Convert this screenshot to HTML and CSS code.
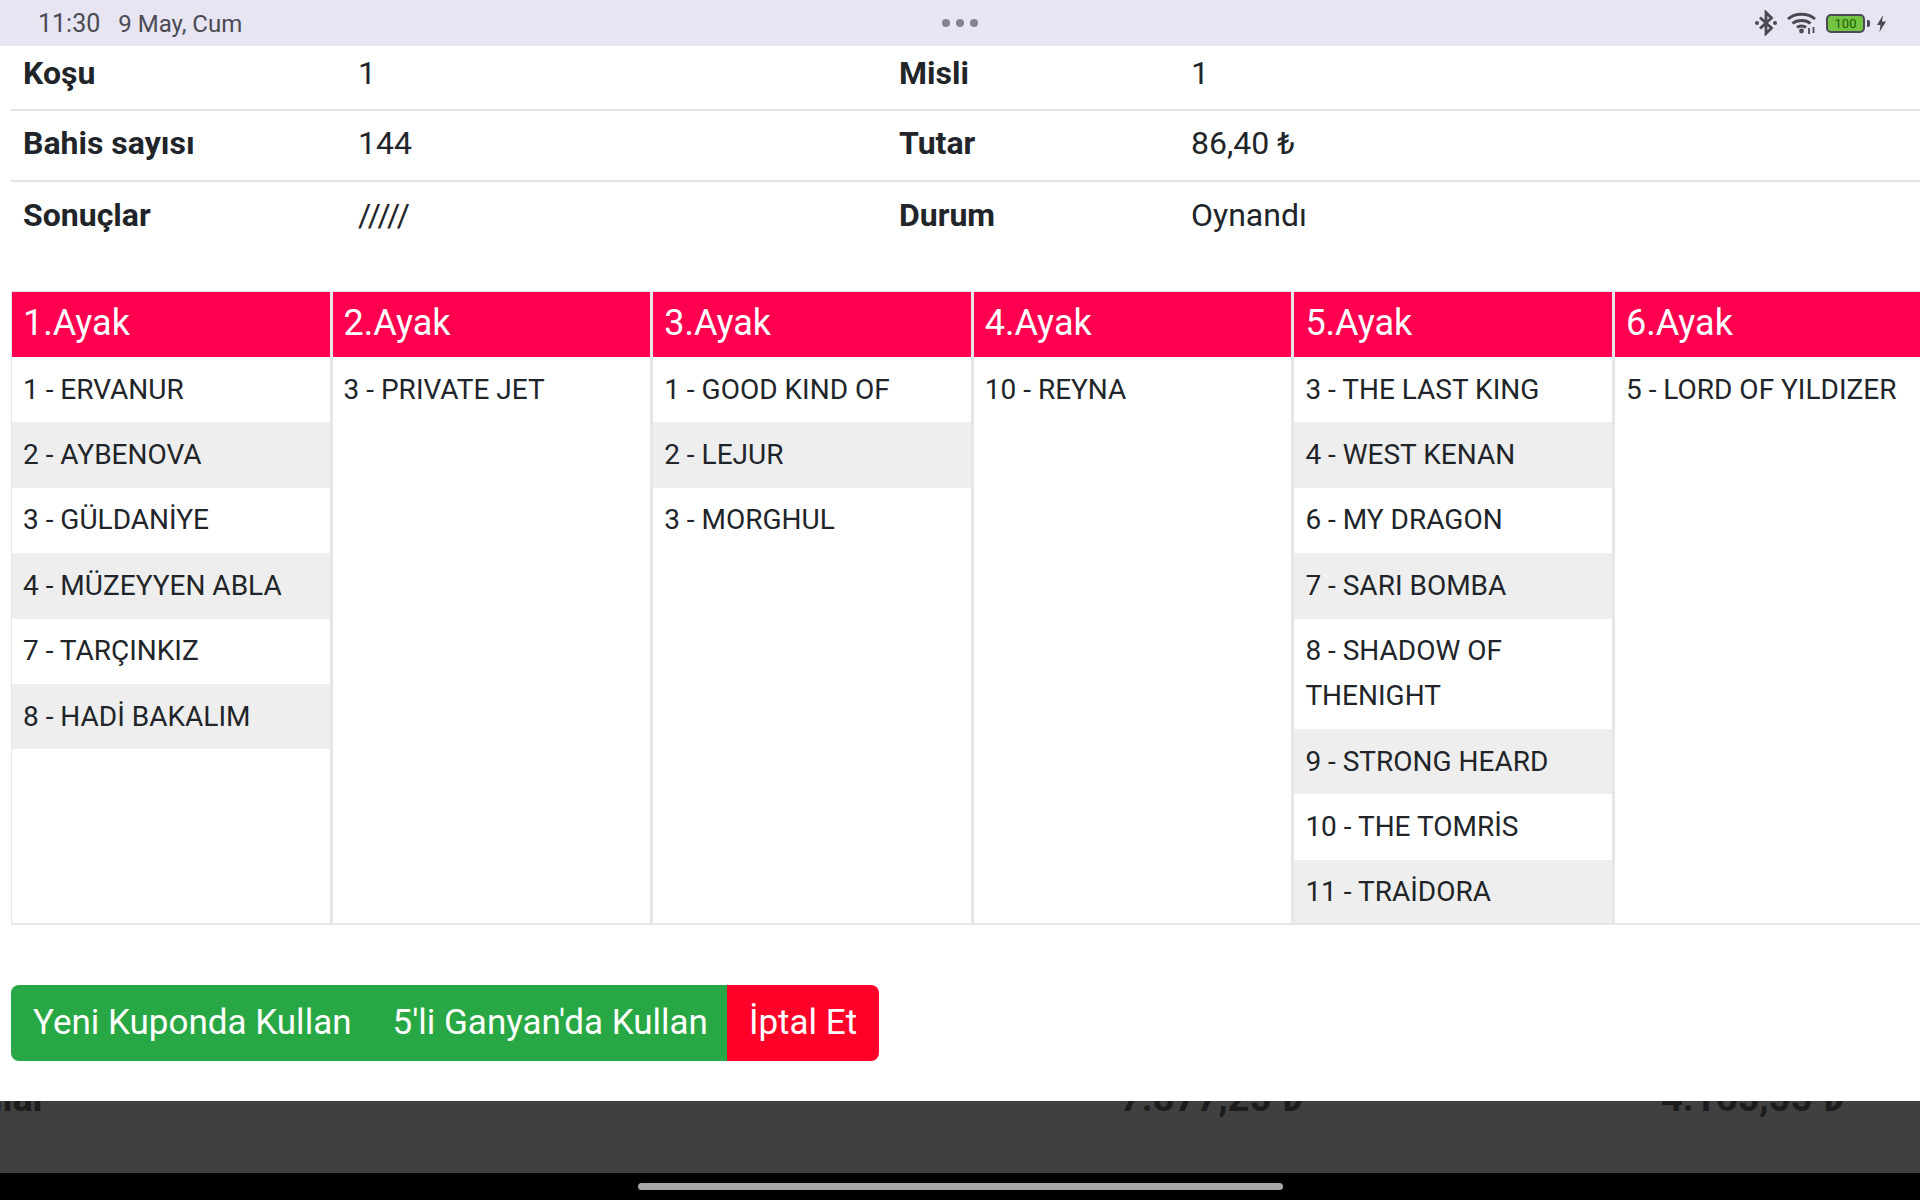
FILE: index.html
```html
<!DOCTYPE html>
<html lang="tr">
  <head>
    <meta charset="UTF-8">
    <title>Kupon Detayı</title>
    <link rel="stylesheet" href="styles.css">
  </head>
  <body>
    <div class="statusBar">
      <div class="statusLeft"><span class="statusTime">11:30</span><span>9 May, Cum</span></div>
      <div class="statusDots"><i></i><i></i><i></i></div>
      <div class="statusIcons">
        <svg width="22" height="26" viewBox="0 0 22 26" fill="none" stroke="#4a4a55" stroke-width="2.8">
          <path d="M5 7.500 L16.500 18 L11 23.500 V2.500 L16.500 8 L5 18.500"/>
          <circle cx="2" cy="13" r="2" fill="#4a4a55" stroke="none"/>
          <circle cx="20" cy="13" r="2" fill="#4a4a55" stroke="none"/>
        </svg>
        <svg width="29" height="22" viewBox="0 0 29 22" fill="none" stroke="#4a4a55" stroke-width="3">
          <path d="M1 7 C8 0.500 21 0.500 28 7"/>
          <path d="M5.500 11.500 C10 7.500 19 7.500 23.500 11.500"/>
          <path d="M10 15.500 C12.500 13.500 16.500 13.500 19 15.500"/>
          <circle cx="14.500" cy="19" r="2.400" fill="#4a4a55" stroke="none"/>
          <path d="M22 16 V22 M26.500 15 V21" stroke-width="1.800"/>
        </svg>
        <div class="battery"><div class="batteryBody">100</div><div class="batteryCap"></div></div>
        <svg class="boltIcon" width="9" height="17" viewBox="0 0 9 17" fill="#4a4a55">
          <path d="M6 0 L0 10 H3.500 L2.500 17 L9 6.500 H5 Z"/>
        </svg>
      </div>
    </div>

    <section class="modal">
      <div class="infoTable">
        <div class="infoRow">
          <div class="infoLabel">Koşu</div><div>1</div>
          <div class="infoLabel">Misli</div><div>1</div>
        </div>
        <div class="infoRow">
          <div class="infoLabel">Bahis sayısı</div><div>144</div>
          <div class="infoLabel">Tutar</div><div>86,40 ₺</div>
        </div>
        <div class="infoRow">
          <div class="infoLabel">Sonuçlar</div><div>/////</div>
          <div class="infoLabel">Durum</div><div>Oynandı</div>
        </div>
      </div>

      <div class="legsTable">
        <div class="leg">
          <div class="legTitle">1.Ayak</div>
          <div class="horse">1 - ERVANUR</div>
          <div class="horse">2 - AYBENOVA</div>
          <div class="horse">3 - GÜLDANİYE</div>
          <div class="horse">4 - MÜZEYYEN ABLA</div>
          <div class="horse">7 - TARÇINKIZ</div>
          <div class="horse">8 - HADİ BAKALIM</div>
        </div>
        <div class="leg">
          <div class="legTitle">2.Ayak</div>
          <div class="horse">3 - PRIVATE JET</div>
        </div>
        <div class="leg">
          <div class="legTitle">3.Ayak</div>
          <div class="horse">1 - GOOD KIND OF</div>
          <div class="horse">2 - LEJUR</div>
          <div class="horse">3 - MORGHUL</div>
        </div>
        <div class="leg">
          <div class="legTitle">4.Ayak</div>
          <div class="horse">10 - REYNA</div>
        </div>
        <div class="leg">
          <div class="legTitle">5.Ayak</div>
          <div class="horse">3 - THE LAST KING</div>
          <div class="horse">4 - WEST KENAN</div>
          <div class="horse">6 - MY DRAGON</div>
          <div class="horse">7 - SARI BOMBA</div>
          <div class="horse">8 - SHADOW OF THENIGHT</div>
          <div class="horse">9 - STRONG HEARD</div>
          <div class="horse">10 - THE TOMRİS</div>
          <div class="horse">11 - TRAİDORA</div>
        </div>
        <div class="leg">
          <div class="legTitle">6.Ayak</div>
          <div class="horse">5 - LORD OF YILDIZER</div>
        </div>
      </div>

      <div class="buttonGroup">
        <button class="actionButton greenButton">Yeni Kuponda Kullan</button>
        <button class="actionButton greenButton">5'li Ganyan'da Kullan</button>
        <button class="actionButton redButton">İptal Et</button>
      </div>
    </section>

    <div class="backdrop">
      <div class="backdropRow">
        <span>Toplamlar</span>
        <span>7.877,25 ₺</span>
        <span>4.165,55 ₺</span>
      </div>
    </div>

    <div class="navBar"><div class="homeBar"></div></div>
  </body>
</html>
```

FILE: styles.css
```css
* {
  box-sizing: border-box;
}

html, body {
  height: 100%;
}

body {
  margin: 0px;
  display: flex;
  flex-direction: column;
  overflow: hidden;
  font-family: Roboto, Arial, sans-serif;
  color: #212529;
  background-color: white;
}

/* status bar */
.statusBar {
  height: 46px;
  flex-shrink: 0;
  display: grid;
  grid-template-columns: 1fr auto 1fr;
  align-items: center;
  padding: 0px 34px 0px 38px;
  background-color: #e7e5f1;
  color: #4a4a55;
  font-size: 24px;
}

.statusLeft {
  display: flex;
  align-items: baseline;
  gap: 18px;
}

.statusTime {
  font-size: 25px;
}

.statusDots {
  display: flex;
  gap: 6px;
  margin-right: 4px;
}

.statusDots i {
  width: 8px;
  height: 8px;
  border-radius: 50%;
  background-color: #85828f;
}

.statusIcons {
  display: flex;
  align-items: center;
  justify-content: flex-end;
  gap: 10px;
}

.battery {
  display: flex;
  align-items: center;
  gap: 2px;
}

.batteryBody {
  width: 39px;
  height: 19px;
  border: 2px solid #4a4a55;
  border-radius: 5px;
  background-color: #72c442;
  color: #1f5a00;
  font-size: 13px;
  line-height: 15px;
  text-align: center;
}

.batteryCap {
  width: 3px;
  height: 7px;
  border-radius: 0px 2px 2px 0px;
  background-color: #4a4a55;
}

.boltIcon {
  margin-left: -3px;
}

/* modal */
.modal {
  height: 1055px;
  flex-shrink: 0;
  padding-left: 11px;
  background-color: white;
  overflow: hidden;
}

.infoTable {
  font-size: 32px;
}

.infoRow {
  display: grid;
  grid-template-columns: 335px 541px 292px 1fr;
  align-items: center;
  height: 71px;
  padding-bottom: 5px;
  border-bottom: 2px solid #e4e4e6;
}

.infoRow > div {
  padding-left: 12px;
}

.infoRow:first-child {
  height: 65px;
  padding-bottom: 9px;
}

.infoRow:last-child {
  height: 67px;
  padding-bottom: 2px;
  border-bottom: none;
}

.infoLabel {
  font-weight: bold;
}

/* legs */
.legsTable {
  display: grid;
  grid-template-columns: repeat(6, 320.6px);
  height: 634px;
  margin-top: 42px;
  border-top: 1px solid #e6e6e8;
  border-bottom: 2px solid #e6e6e8;
  border-left: 1px solid #e6e6e8;
}

.leg {
  display: flex;
  flex-direction: column;
  overflow: hidden;
  border-right: 3px solid #e6e6e8;
}

.legTitle {
  height: 65px;
  flex-shrink: 0;
  padding: 10px 11px;
  font-size: 36px;
  line-height: 42px;
  color: white;
  background-color: #ff0050;
}

.horse {
  flex-shrink: 0;
  padding: 9.7px 11px 10.7px;
  font-size: 28px;
  line-height: 45px;
  color: #212529;
}

.horse:nth-child(odd) {
  background-color: #eeeeee;
}

/* buttons */
.buttonGroup {
  display: flex;
  margin-top: 60px;
}

.actionButton {
  height: 76px;
  padding: 0px 19px 2px 22px;
  border: none;
  font-family: inherit;
  font-size: 35px;
  color: white;
}

.greenButton {
  background-color: #28a745;
}

.greenButton:first-child {
  border-radius: 8px 0px 0px 8px;
}

.redButton {
  padding-right: 22px;
  background-color: #ff0029;
  border-radius: 0px 8px 8px 0px;
}

/* page behind the modal */
.backdrop {
  flex-grow: 1;
  overflow: hidden;
  background-color: #404040;
}

.backdropRow {
  display: grid;
  grid-template-columns: 1244px 541px 1fr;
  margin-top: -24px;
  margin-left: -124px;
  font-size: 38px;
  line-height: 42px;
  font-weight: bold;
  color: #1c1c1c;
}

/* android nav */
.navBar {
  height: 27px;
  flex-shrink: 0;
  display: flex;
  justify-content: center;
  align-items: center;
  background-color: black;
}

.homeBar {
  width: 645px;
  height: 7px;
  border-radius: 4px;
  background-color: #a8a8a8;
}
```
